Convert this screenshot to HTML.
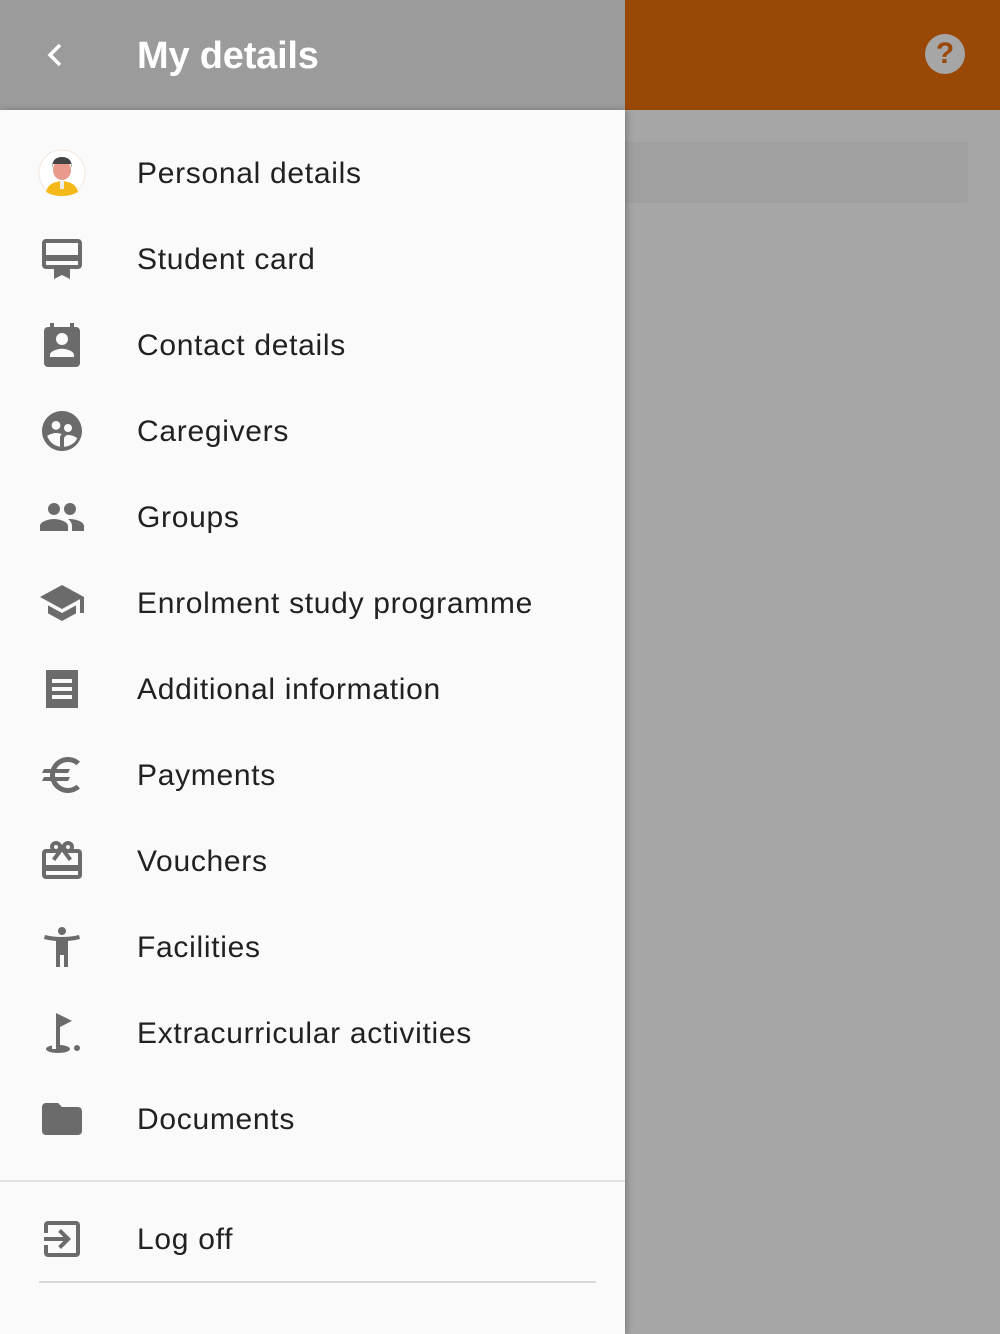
<!DOCTYPE html>
<html><head><meta charset="utf-8"><style>
*{margin:0;padding:0;box-sizing:border-box}
body{width:1000px;height:1334px;overflow:hidden;position:relative;font-family:"Liberation Sans",sans-serif;background:#a6a6a6}
.hdrL{position:absolute;left:0;top:0;width:625px;height:110px;background:#9b9b9b}
.hdrR{position:absolute;left:625px;top:0;width:375px;height:110px;background:#9a4805}
.title{position:absolute;left:137px;top:35px;font-size:38px;font-weight:bold;color:#fff;letter-spacing:-0.2px}
.card{position:absolute;left:625px;top:142px;width:343px;height:61px;background:#a0a0a0;border-radius:0 4px 4px 0}
.help{position:absolute;left:925px;top:34px;width:40px;height:40px;border-radius:50%;background:#a6a6a6;color:#9a4805;font-weight:bold;font-size:30px;text-align:center;line-height:40px}
.panel{position:absolute;left:0;top:110px;width:625px;height:1224px;background:#fafafa;box-shadow:2px 0 6px rgba(0,0,0,.25)}
.item{position:absolute;left:0;height:60px;width:625px}
.item svg{position:absolute;left:38px;top:6px;width:48px;height:48px;fill:#6b6b6b}
.item span{position:absolute;left:137px;top:13px;font-size:30px;color:#212121;line-height:36px;letter-spacing:0.7px}
.div{position:absolute;left:0;top:1070px;width:625px;height:2px;background:#e3e3e3}
.bot{position:absolute;left:39px;top:1171px;width:557px;height:2px;background:#d8d8d8}
</style></head><body>
<div class="hdrL"></div><div class="hdrR"></div>
<svg style="position:absolute;left:40px;top:40px" width="30" height="30" viewBox="0 0 30 30"><path d="M20 5 L10 15 L20 25" stroke="#fff" stroke-width="3.5" fill="none"/></svg>
<div class="title">My details</div>
<div class="help">?</div>
<div class="card"></div>
<div class="panel">
<div class="item" style="top:33px"><svg viewBox="0 0 48 48" style="fill:none"><circle cx="24" cy="24" r="23" fill="#fff" stroke="#f3e7dd"/><path d="M8 43 Q10 33 24 32 Q38 33 40 43 Q33 47 24 47 Q15 47 8 43Z" fill="#f4b918"/><ellipse cx="24" cy="21" rx="9" ry="10" fill="#e99a8c"/><path d="M14 19 Q14 8 24 8 Q34 8 34 19 L33 15 L15 15Z" fill="#444"/><rect x="22" y="32" width="4" height="8" fill="#eee"/></svg><span>Personal details</span></div>
<div class="item" style="top:119px"><svg viewBox="0 0 24 24"><path d="M20 2H4c-1.1 0-2 .9-2 2v11c0 1.1.9 2 2 2h4v5l4-2 4 2v-5h4c1.1 0 2-.9 2-2V4c0-1.1-.9-2-2-2zm0 13H4v-2h16v2zm0-5H4V4h16v6z"/></svg><span>Student card</span></div>
<div class="item" style="top:205px"><svg viewBox="0 0 24 24"><path d="M18 3V1h-2v2H8V1H6v2H5c-1.1 0-2 .9-2 2v16c0 1.1.9 2 2 2h14c1.1 0 2-.9 2-2V5c0-1.1-.9-2-2-2h-1zm-6 3c1.7 0 3 1.3 3 3s-1.3 3-3 3-3-1.3-3-3 1.3-3 3-3zm6 12H6v-1c0-2 4-3.1 6-3.1s6 1.1 6 3.1v1z"/></svg><span>Contact details</span></div>
<div class="item" style="top:291px"><svg viewBox="0 0 24 24"><path d="M12 2C6.5 2 2 6.5 2 12s4.5 10 10 10 10-4.5 10-10S17.5 2 12 2zm-3 5a2.2 2.2 0 110 4.4A2.2 2.2 0 019 7zm6 1.5a2 2 0 110 4 2 2 0 010-4zM11 19.9c-3-.4-5.5-2.6-6.4-5.5C6 13.5 8 13 9 13c.8 0 2 .2 2.9.5-1 .8-.9 1.8-.9 2.5v3.9zm2 0V16c0-1.5 1.5-2 2-2 2 0 3.6.8 4.6 1.6-.9 2.3-3.5 4-6.6 4.3z"/></svg><span>Caregivers</span></div>
<div class="item" style="top:377px"><svg viewBox="0 0 24 24"><path d="M16 11c1.66 0 2.99-1.34 2.99-3S17.66 5 16 5c-1.66 0-3 1.34-3 3s1.340 3 3 3zm-8 0c1.66 0 2.99-1.34 2.99-3S9.66 5 8 5C6.34 5 5 6.34 5 8s1.34 3 3 3zm0 2c-2.33 0-7 1.17-7 3.5V19h14v-2.5c0-2.33-4.67-3.5-7-3.5zm8 0c-.29 0-.62.02-.97.05 1.16.84 1.97 1.970 1.97 3.45V19h6v-2.5c0-2.33-4.67-3.5-7-3.5z"/></svg><span>Groups</span></div>
<div class="item" style="top:463px"><svg viewBox="0 0 24 24"><path d="M5 13.18v4L12 21l7-3.82v-4L12 17l-7-3.82zM12 3L1 9l11 6 9-4.91V17h2V9L12 3z"/></svg><span>Enrolment study programme</span></div>
<div class="item" style="top:549px"><svg viewBox="0 0 24 24"><path d="M4 2.5h16v19H4zM7 7v2h10V7zm0 4v2h10v-2zm0 4v2h10v-2z" fill-rule="evenodd"/></svg><span>Additional information</span></div>
<div class="item" style="top:635px"><svg viewBox="0 0 24 24"><path d="M15 18.5c-2.5 0-4.7-1.4-5.8-3.5H15l1-2H8.6c-.1-.3-.1-.7-.1-1s0-.7.1-1H15l1-2H9.2C10.3 6.9 12.5 5.5 15 5.5c1.6 0 3.1.6 4.2 1.6L21 5.3C19.4 3.9 17.3 3 15 3c-3.9 0-7.3 2.5-8.5 6H3l-1 2h4.1c0 .3-.1.7-.1 1s0 .7.1 1H3l-1 2h4.5c1.2 3.5 4.6 6 8.5 6 2.3 0 4.4-.9 6-2.3l-1.8-1.8c-1.1 1-2.6 1.6-4.2 1.6z"/></svg><span>Payments</span></div>
<div class="item" style="top:721px"><svg viewBox="0 0 24 24"><path d="M20 6h-2.2c.1-.3.2-.7.2-1 0-1.7-1.3-3-3-3-1 0-1.9.5-2.5 1.3L12 4l-.5-.7C10.9 2.5 10 2 9 2 7.3 2 6 3.3 6 5c0 .3.1.7.2 1H4c-1.1 0-2 .9-2 2v11c0 1.1.9 2 2 2h16c1.1 0 2-.9 2-2V8c0-1.1-.9-2-2-2zm-5-2c.6 0 1 .4 1 1s-.4 1-1 1-1-.4-1-1 .4-1 1-1zM9 4c.6 0 1 .4 1 1s-.4 1-1 1-1-.4-1-1 .4-1 1-1zm11 15H4v-2h16v2zm0-5H4V8h5.1L7 10.8 8.6 12 12 7.4l3.4 4.6 1.6-1.2L14.9 8H20v6z"/></svg><span>Vouchers</span></div>
<div class="item" style="top:807px"><svg viewBox="0 0 24 24"><path d="M20.5 6c-2.6.7-5.6 1-8.5 1s-5.9-.3-8.5-1L3 8c1.9.5 4 .8 6 1v13h2v-6h2v6h2V9c2-.2 4.1-.5 6-1l-.5-2zM12 6c1.1 0 2-.9 2-2s-.9-2-2-2-2 .9-2 2 .9 2 2 2z"/></svg><span>Facilities</span></div>
<div class="item" style="top:893px"><svg viewBox="0 0 24 24"><circle cx="19.5" cy="19.5" r="1.5"/><path d="M17 5.92L9 2v18H7v-1.73c-1.79.35-3 .99-3 1.73 0 1.1 2.69 2 6 2s6-.9 6-2c0-.99-2.16-1.81-5-1.97V8.98l6-3.06z"/></svg><span>Extracurricular activities</span></div>
<div class="item" style="top:979px"><svg viewBox="0 0 24 24"><path d="M10 4H4c-1.1 0-2 .9-2 2v12c0 1.1.9 2 2 2h16c1.1 0 2-.9 2-2V8c0-1.1-.9-2-2-2h-8l-2-2z"/></svg><span>Documents</span></div>
<div class="div"></div>
<div class="item" style="top:1099px"><svg viewBox="0 0 24 24"><path d="M10.09 15.59L11.5 17l5-5-5-5-1.41 1.41L12.67 11H3v2h9.67l-2.58 2.59zM19 3H5c-1.11 0-2 .9-2 2v4h2V5h14v14H5v-4H3v4c0 1.1.89 2 2 2h14c1.1 0 2-.9 2-2V5c0-1.1-.9-2-2-2z"/></svg><span>Log off</span></div>
<div class="bot"></div>
</div>
</body></html>
